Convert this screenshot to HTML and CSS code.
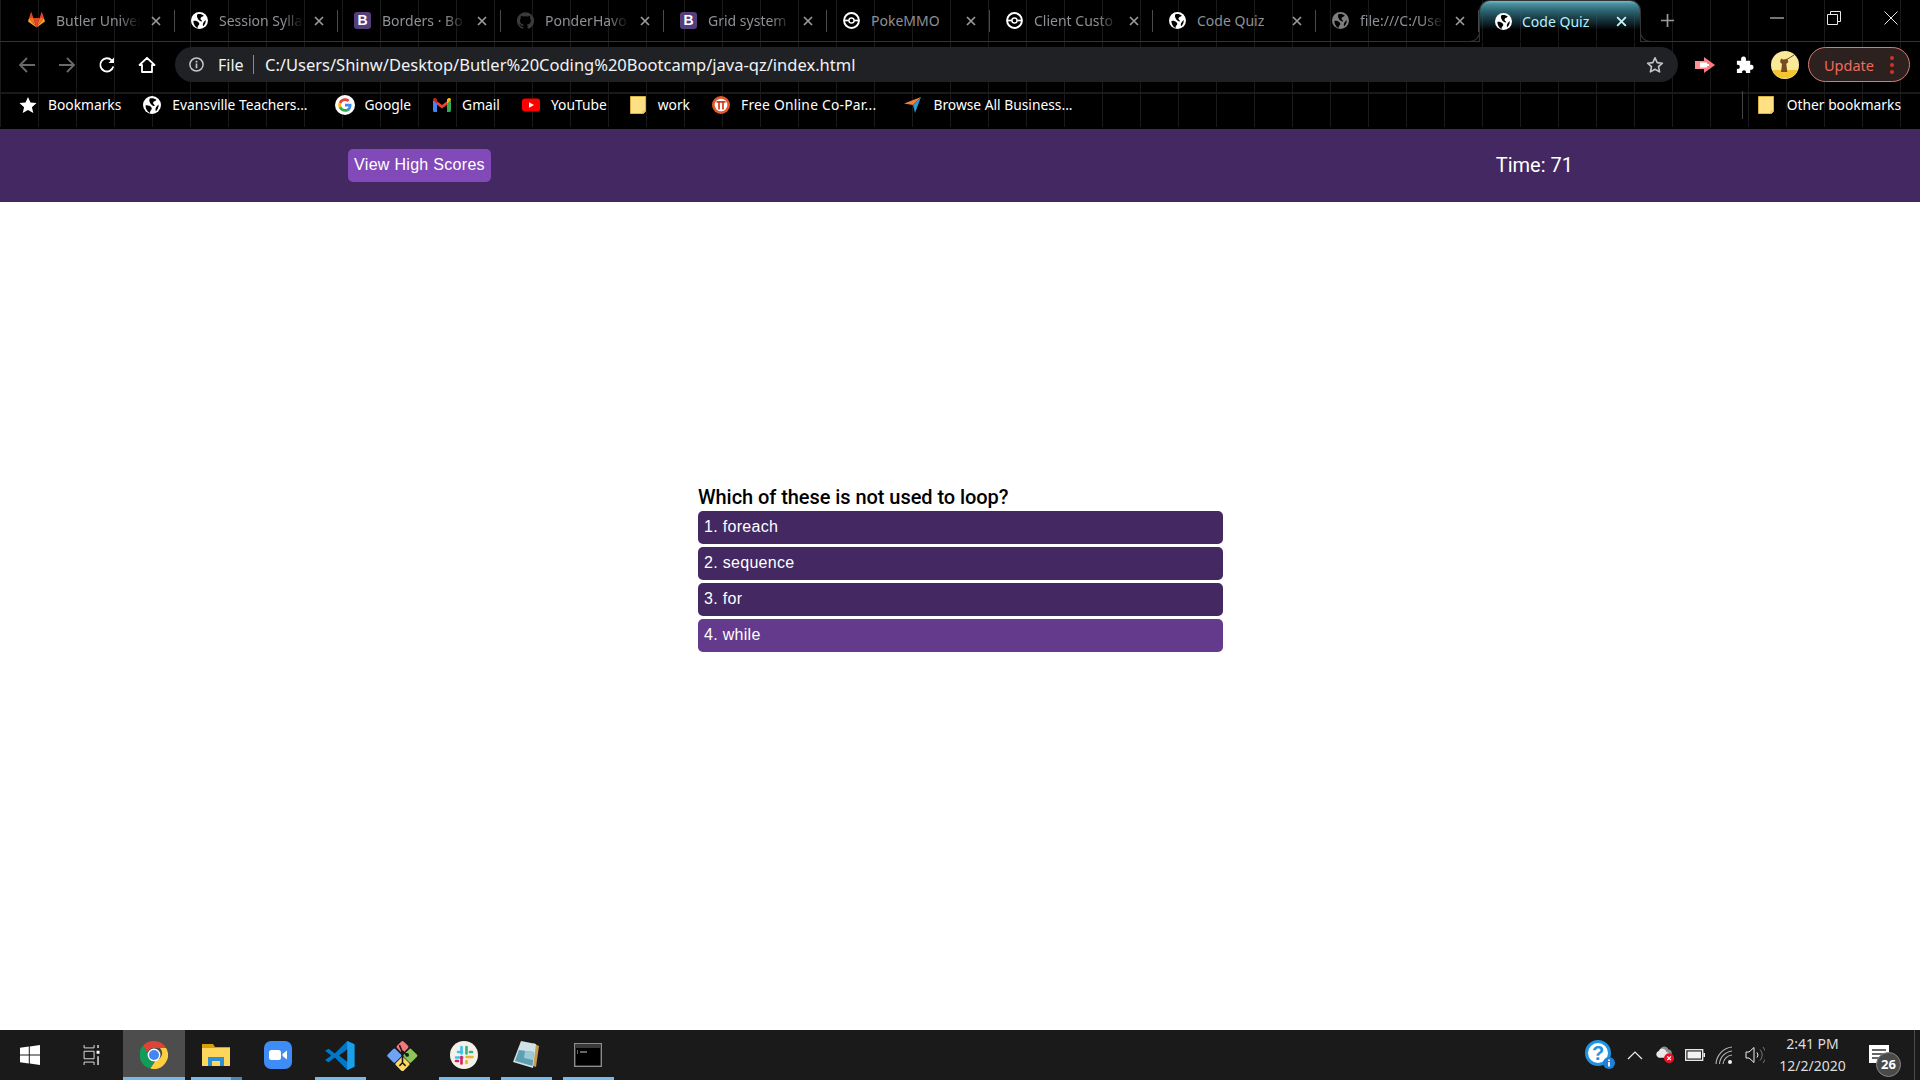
FILE: index.html
```html
<!DOCTYPE html>
<html lang="en">
<head>
  <meta charset="UTF-8" />
  <title>Code Quiz</title>
  <link rel="stylesheet" href="styles.css">
</head>
<body>
  <svg class="sprites" xmlns="http://www.w3.org/2000/svg">
    <symbol id="globe" viewBox="0 0 16 16">
      <circle cx="8" cy="8" r="8" fill="currentColor"/>
      <path fill="#000" d="M6 2.200c2-.6 4.500-.2 6 1.200-1 1.600-2.500 1-3 2.400-.5 1.400 1.500 1.800 1.500 3-1.200.4-3-.8-3.800-2C6 5.500 5 4 6 2.200zM2.200 8.500c1.800-.6 3.800.2 5 1.300 1 1 .6 2.300-.3 3-.6.5-.6 1.500-.7 2.300C3.800 14.200 2.300 11.500 2.200 8.500zM13.800 7.500c.3 2.500-.8 4.500-2.300 6-.8-1.500-.3-3 .6-4.200.5-.7 1-1.300 1.700-1.800z"/>
    </symbol>
    <symbol id="pokeball" viewBox="0 0 16 16">
      <circle cx="8" cy="8" r="7" fill="none" stroke="currentColor" stroke-width="1.800"/>
      <path d="M1 8h14" stroke="currentColor" stroke-width="1.600"/>
      <circle cx="8" cy="8" r="2.400" fill="#000" stroke="currentColor" stroke-width="1.300"/>
    </symbol>
    <symbol id="close" viewBox="0 0 12 12">
      <path d="M2 2l8 8M10 2l-8 8" stroke="currentColor" stroke-width="1.700" fill="none"/>
    </symbol>
    <symbol id="folder" viewBox="0 0 16 18">
      <path fill="#ffe082" stroke="#d9b13f" stroke-width="1" d="M.5.500h15v15l-2 2H.500z"/>
      <path fill="#e8c252" d="M12.500 14.500h3l-3 3z"/>
    </symbol>
  </svg>

  <div class="browser">
    <div class="tabstrip">
      <div class="tab">
        <svg class="fav" viewBox="0 0 24 24">
          <path fill="#e24329" d="M12 22 16.400 8.500H7.600z"/>
          <path fill="#fc6d26" d="M12 22 7.600 8.500H1.500zM12 22l4.400-13.500h6.100z"/>
          <path fill="#fca326" d="M1.500 8.500.2 12.600c-.1.4 0 .8.3 1L12 22zM22.500 8.500l1.300 4.100c.1.400 0 .8-.3 1L12 22z"/>
          <path fill="#e24329" d="M1.500 8.500h6.100L5 .6c-.1-.4-.7-.4-.9 0zM22.500 8.500h-6.100L19 .6c.1-.4.700-.4.900 0z"/>
        </svg>
        <span class="tab-title">Butler Univer</span>
        <svg class="tab-x"><use href="#close"/></svg>
      </div>
      <div class="tab">
        <svg class="fav globe-ic"><use href="#globe"/></svg>
        <span class="tab-title">Session Sylla</span>
        <svg class="tab-x"><use href="#close"/></svg>
      </div>
      <div class="tab">
        <span class="fav fav-b">B</span>
        <span class="tab-title">Borders · Bo</span>
        <svg class="tab-x"><use href="#close"/></svg>
      </div>
      <div class="tab">
        <svg class="fav" viewBox="0 0 24 24"><path fill="#3b3b3b" d="M12 .3a12 12 0 0 0-3.800 23.400c.6.1.8-.3.8-.6v-2c-3.300.7-4-1.600-4-1.600-.6-1.400-1.400-1.800-1.400-1.800-1-.7.1-.7.1-.7 1.200.1 1.800 1.200 1.800 1.200 1 1.800 2.800 1.300 3.500 1 .1-.8.4-1.300.8-1.600-2.700-.3-5.500-1.300-5.500-6 0-1.200.5-2.300 1.300-3.100-.2-.4-.6-1.600 0-3.200 0 0 1-.3 3.400 1.200a11.500 11.500 0 0 1 6 0c2.300-1.500 3.300-1.200 3.300-1.200.6 1.600.2 2.800 0 3.200.9.8 1.300 1.900 1.300 3.200 0 4.600-2.800 5.600-5.500 5.900.5.4.9 1 .9 2.200v3.300c0 .3.2.7.8.6A12 12 0 0 0 12 .3"/></svg>
        <span class="tab-title">PonderHavo</span>
        <svg class="tab-x"><use href="#close"/></svg>
      </div>
      <div class="tab">
        <span class="fav fav-b">B</span>
        <span class="tab-title">Grid system</span>
        <svg class="tab-x"><use href="#close"/></svg>
      </div>
      <div class="tab">
        <svg class="fav globe-ic"><use href="#pokeball"/></svg>
        <span class="tab-title tab-title-full">PokeMMO</span>
        <svg class="tab-x"><use href="#close"/></svg>
      </div>
      <div class="tab">
        <svg class="fav globe-ic"><use href="#pokeball"/></svg>
        <span class="tab-title">Client Custo</span>
        <svg class="tab-x"><use href="#close"/></svg>
      </div>
      <div class="tab">
        <svg class="fav globe-ic"><use href="#globe"/></svg>
        <span class="tab-title tab-title-full">Code Quiz</span>
        <svg class="tab-x"><use href="#close"/></svg>
      </div>
      <div class="tab">
        <svg class="fav globe-dim"><use href="#globe"/></svg>
        <span class="tab-title">file:///C:/Use</span>
        <svg class="tab-x"><use href="#close"/></svg>
      </div>
      <div class="tab tab-active">
        <svg class="fav globe-ic"><use href="#globe"/></svg>
        <span class="tab-title tab-title-full">Code Quiz</span>
        <svg class="tab-x"><use href="#close"/></svg>
      </div>
      <svg class="new-tab" viewBox="0 0 16 16"><path d="M8 1v14M1 8h14" stroke="#9a9a9a" stroke-width="1.800"/></svg>
      <div class="win-btns">
        <svg class="win-btn" viewBox="0 0 14 14"><path d="M0 7h14" stroke="#e8e8e8" stroke-width="1"/></svg>
        <svg class="win-btn" viewBox="0 0 14 14"><path d="M.5 3.500h10v10H.500zM3.500 3.500v-3h10v10h-3" stroke="#e8e8e8" fill="none"/></svg>
        <svg class="win-btn" viewBox="0 0 14 14"><path d="M.5.500l13 13M13.500.500l-13 13" stroke="#e8e8e8" fill="none"/></svg>
      </div>
    </div>

    <div class="toolbar">
      <div class="nav-btns">
        <svg class="nav-ic" viewBox="0 0 18 18"><path d="M17 9H2M9 2 2 9l7 7" stroke="#6a6a6a" stroke-width="1.800" fill="none"/></svg>
        <svg class="nav-ic" viewBox="0 0 18 18"><path d="M1 9h15M9 2l7 7-7 7" stroke="#6a6a6a" stroke-width="1.800" fill="none"/></svg>
        <svg class="nav-ic" viewBox="0 0 18 18"><path d="M15.300 10.500A6.600 6.600 0 1 1 13.700 4.300" stroke="#fff" stroke-width="1.800" fill="none"/><path d="M16 1.500V7h-5.500z" fill="#fff"/></svg>
        <svg class="nav-ic" viewBox="0 0 18 18"><path d="M9 1.800 1.500 9H4v7h10V9h2.500z" stroke="#fff" stroke-width="1.800" fill="none" stroke-linejoin="round"/></svg>
      </div>
      <div class="omnibox">
        <svg class="info-ic" viewBox="0 0 16 16"><circle cx="8" cy="8" r="7" stroke="#c6c6c6" stroke-width="1.600" fill="none"/><path d="M8 7v5M8 4v1.800" stroke="#c6c6c6" stroke-width="1.800"/></svg>
        <span class="omni-file">File</span>
        <span class="omni-sep"></span>
        <span class="omni-url">C:/Users/Shinw/Desktop/Butler%20Coding%20Bootcamp/java-qz/index.html</span>
        <svg class="star-ic" viewBox="0 0 18 18"><path d="M9 1.800l2.200 4.800 5.200.6-3.900 3.500 1.100 5.200L9 13.300l-4.600 2.600 1.100-5.200-3.900-3.500 5.200-.6z" stroke="#c6c6c6" stroke-width="1.600" fill="none" stroke-linejoin="round"/></svg>
      </div>
      <div class="toolbar-right">
        <svg class="ext-ic" viewBox="0 0 20 16"><path fill="#ff8f94" d="M0 4h9v8H0z"/><path fill="#ff7b84" d="M9 0l11 8-11 8z"/><path fill="#fff" d="M5 5.500h7V7h2v2h-2v1.500H5z"/></svg>
        <svg class="puzzle-ic" viewBox="0 0 20 20"><path fill="#fff" d="M2 6h4.500C6 3.500 6.800 1.500 9 1.500s3 2 2.500 4.500H16v4.500c2.500-.5 3.500.5 3.500 2.500s-1 3-3.500 2.500V19h-4.500c.5-2-.5-3-2-3s-2.500 1-2 3H2v-4.500c2 .5 3-.5 3-2s-1-2.500-3-2z"/></svg>
        <svg class="avatar" viewBox="0 0 28 28">
          <circle cx="14" cy="14" r="14" fill="#fbe99a"/>
          <path fill="#f2c531" d="M1.200 19h25.600A14 14 0 0 1 1.200 19z"/>
          <path fill="#7a4a22" d="M10 21l1-8-2-2 1-3.500 2 1 2.500-.2 1.800-.9 1 3.600-2 2 1 8z"/>
          <path stroke="#7a4a22" stroke-width="1" d="M15 9l8-5"/>
        </svg>
        <div class="update-pill">
          <span>Update</span>
          <span class="pill-dots"><i></i><i></i><i></i></span>
        </div>
      </div>
    </div>

    <div class="bookmarks">
      <div class="bm">
        <svg class="bm-ic" viewBox="0 0 16 16"><path fill="#fff" d="M8 .800l2.200 5 5.400.5-4.100 3.600 1.200 5.300L8 12.400l-4.700 2.800 1.200-5.300L.4 6.300l5.400-.5z"/></svg>
        <span>Bookmarks</span>
      </div>
      <div class="bm bm-long">
        <svg class="bm-ic globe-ic"><use href="#globe"/></svg>
        <span>Evansville Teachers...</span>
      </div>
      <div class="bm">
        <svg class="bm-ic bm-ic-big" viewBox="0 0 26 26">
          <circle cx="13" cy="13" r="13" fill="#fff"/>
          <g transform="translate(3.400 3.400) scale(.8)">
            <path fill="#4285F4" d="M22.560 12.250c0-.78-.07-1.530-.2-2.250H12v4.260h5.920c-.26 1.370-1.040 2.530-2.210 3.310v2.770h3.570c2.080-1.920 3.280-4.740 3.280-8.090z"/>
            <path fill="#34A853" d="M12 23c2.970 0 5.460-.98 7.280-2.660l-3.570-2.770c-.98.66-2.230 1.060-3.710 1.060-2.860 0-5.290-1.930-6.160-4.530H2.180v2.840C3.990 20.530 7.700 23 12 23z"/>
            <path fill="#FBBC05" d="M5.840 14.090c-.22-.66-.35-1.360-.35-2.090s.13-1.430.35-2.090V7.070H2.180C1.430 8.550 1 10.220 1 12s.43 3.450 1.180 4.930l3.660-2.840z"/>
            <path fill="#EA4335" d="M12 5.380c1.620 0 3.060.56 4.210 1.640l3.150-3.150C17.450 2.090 14.970 1 12 1 7.700 1 3.990 3.470 2.180 7.070l3.660 2.840c.87-2.600 3.300-4.530 6.160-4.530z"/>
          </g>
        </svg>
        <span>Google</span>
      </div>
      <div class="bm">
        <svg class="bm-ic" viewBox="0 0 18 14">
          <path fill="#ea4335" d="M1 1l8 6 8-6v3.500L9 10.500 1 4.500z"/>
          <path fill="#4285f4" d="M0 2v10.500c0 .8.700 1.500 1.500 1.500H4V5.500z"/>
          <path fill="#34a853" d="M18 2v10.500c0 .8-.7 1.500-1.500 1.500H14V5.500z"/>
          <path fill="#c5221f" d="M0 2c0-2 2-2.500 3-1.500L4 1.300v4.200z"/>
          <path fill="#fbbc04" d="M18 2c0-2-2-2.500-3-1.500l-1 .8v4.200z"/>
        </svg>
        <span>Gmail</span>
      </div>
      <div class="bm">
        <svg class="bm-ic" viewBox="0 0 18 13"><rect width="18" height="13" rx="3" fill="#f00"/><path fill="#fff" d="M7 3.700v5.600l5-2.800z"/></svg>
        <span>YouTube</span>
      </div>
      <div class="bm">
        <svg class="bm-ic"><use href="#folder"/></svg>
        <span>work</span>
      </div>
      <div class="bm bm-long bm-wide">
        <svg class="bm-ic" viewBox="0 0 16 16"><circle cx="8" cy="8" r="8" fill="#e2592b"/><circle cx="8" cy="8" r="5.600" fill="#fff"/><path fill="#d23c1e" d="M4 4.500h8v1.500h-1.500V12H9V6H7v6H5.500V6H4z"/></svg>
        <span>Free Online Co-Par...</span>
      </div>
      <div class="bm">
        <svg class="bm-ic" viewBox="0 0 18 18"><path fill="#f0803c" d="M0 7.500 17 1l-8 8z"/><path fill="#2b9bd6" d="M17 1 9 9l2 8z"/></svg>
        <span>Browse All Business...</span>
      </div>
      <div class="bm-other">
        <svg class="bm-ic"><use href="#folder"/></svg>
        <span>Other bookmarks</span>
      </div>
    </div>
  </div>

  <header class="quiz-bar">
    <button class="scores-btn">View High Scores</button>
    <span class="timer">Time: 71</span>
  </header>

  <main class="quiz">
    <div class="quiz-box">
      <h2 class="question">Which of these is not used to loop?</h2>
      <button class="answer">1. foreach</button>
      <button class="answer">2. sequence</button>
      <button class="answer">3. for</button>
      <button class="answer answer-hover">4. while</button>
    </div>
  </main>

  <footer class="taskbar">
    <div class="task task-start">
      <svg class="task-ic-sm" viewBox="0 0 20 20"><path fill="#fff" d="M0 2.800 8.800 1.500v8H0zM9.800 1.400 20 0v9.500H9.800zM0 10.500h8.800v8L0 17.200zM9.800 10.500H20V20L9.800 18.600z"/></svg>
    </div>
    <div class="task task-view">
      <svg class="task-ic-sm" viewBox="0 0 20 24"><path d="M.5 0v3.500h12V0M.5 24v-3.500h12V24M.5 7.500h12v9H.5z" stroke="#fff" fill="none"/><path fill="#fff" d="M16.500 0h1.500v3.500h-1.500zM15.500 7h3.500v3.500h-3.500zM16.500 13.500h1.500V24h-1.500z"/></svg>
    </div>
    <div class="task task-active">
      <svg class="task-ic" viewBox="0 0 28 28">
        <path fill="#db4437" d="M14 0a14 14 0 0 1 12.100 7H14a7 7 0 0 0-6.700 5L3 4.500A14 14 0 0 1 14 0z"/>
        <path fill="#0f9d58" d="M3 4.500 8 13a7 7 0 0 0 6 8l-3.700 6.500A14 14 0 0 1 3 4.500z"/>
        <path fill="#ffcd40" d="M26.100 7A14 14 0 0 1 10.300 27.500L16 19a7 7 0 0 0 4-12z"/>
        <circle cx="14" cy="14" r="6.400" fill="#fff"/>
        <circle cx="14" cy="14" r="5" fill="#4285f4"/>
      </svg>
    </div>
    <div class="task task-open task-stack">
      <svg class="task-ic" viewBox="0 0 28 28">
        <path fill="#d99e0b" d="M0 3h11l2 3h15v4H0z"/>
        <path fill="#ffd65c" d="M0 7h28v18H0z"/>
        <path fill="#2d8fd5" d="M6 16h16v9h-4v-5h-8v5H6z"/>
      </svg>
    </div>
    <div class="task">
      <svg class="task-ic" viewBox="0 0 28 28"><rect width="28" height="28" rx="7" fill="#3f8cf6"/><rect x="5" y="9" width="12" height="10" rx="2.500" fill="#fff"/><path fill="#fff" d="M18.500 13 23 9.500v9L18.500 15z"/></svg>
    </div>
    <div class="task task-open">
      <svg class="task-ic task-ic-big" viewBox="0 0 30 30">
        <path fill="#0078c8" d="M21.500 1 9.500 13 3.500 8.500 0 10.500 6 15l-6 4.500 3.500 2 6-4.500 12 12 7-3V4z"/>
        <path fill="#1c9ee8" d="M21.500 1l7 3v22l-7 3z"/>
        <path fill="#1a1a1a" d="M21.500 9 13.500 15l8 6z"/>
      </svg>
    </div>
    <div class="task">
      <svg class="task-ic task-ic-big" viewBox="0 0 30 30">
        <rect x="11" y="2" width="9" height="9" rx="1.500" transform="rotate(45 15 6)" fill="#f2787c"/>
        <rect x="17.500" y="10" width="10.500" height="10.500" rx="1.500" transform="rotate(45 22.700 15)" fill="#8cc45a"/>
        <rect x="10" y="18" width="10.500" height="10.500" rx="1.500" transform="rotate(45 15 23)" fill="#ffd966"/>
        <rect x="2" y="10" width="10.500" height="10.500" rx="1.500" transform="rotate(45 7.300 15)" fill="#6fa3f5"/>
        <path d="M12 5l3 7v10M15 12l4 2M15 22l-3 3M15 22l3 3" stroke="#1a1a1a" stroke-width="1.500" fill="none"/>
        <circle cx="15" cy="12" r="1.800" fill="#1a1a1a"/>
        <circle cx="19.500" cy="14.500" r="1.800" fill="#1a1a1a"/>
      </svg>
    </div>
    <div class="task task-open">
      <svg class="task-ic" viewBox="0 0 28 28">
        <circle cx="14" cy="14" r="14" fill="#f4f1ea"/>
        <path d="M11.500 6v6.500M8 11h4M6 16.500h6.500" stroke="#36c5f0" stroke-width="2.600" stroke-linecap="round" fill="none"/>
        <path d="M16.500 6v6.500" stroke="#2eb67d" stroke-width="2.600" stroke-linecap="round"/>
        <path d="M20 11h2" stroke="#2eb67d" stroke-width="2.600" stroke-linecap="round"/>
        <path d="M16.500 16h6" stroke="#ecb22e" stroke-width="2.600" stroke-linecap="round"/>
        <path d="M16.500 20v2" stroke="#ecb22e" stroke-width="2.600" stroke-linecap="round"/>
        <path d="M11.500 16v6.500" stroke="#e01e5a" stroke-width="2.600" stroke-linecap="round"/>
        <path d="M6 20h2" stroke="#e01e5a" stroke-width="2.600" stroke-linecap="round"/>
      </svg>
    </div>
    <div class="task task-open">
      <svg class="task-ic" viewBox="0 0 28 28">
        <path fill="#c79a4e" d="M21 2l6 3-3 21-3-1z"/>
        <path fill="#cfe2e5" d="M9 0l15 3-3 24L1 21z"/>
        <path fill="#5e9fb4" d="M7 9l15 2-1.500 14L3 20z"/>
        <path fill="#9ccbd6" d="M13 10l9 1-1 8-9-2z"/>
      </svg>
    </div>
    <div class="task task-open">
      <svg class="task-ic" viewBox="0 0 28 24">
        <rect x=".7" y=".7" width="26.600" height="22.600" fill="#000" stroke="#8c8c8c" stroke-width="1.400"/>
        <path fill="#3a3a3a" d="M1.400 1.400h25.200v3.600H1.400z"/>
        <path d="M3 8h1M3 10h1M6 9h7" stroke="#ccc"/>
      </svg>
    </div>

    <div class="tray">
      <svg class="tray-help" viewBox="0 0 30 30">
        <circle cx="13" cy="13" r="11.500" fill="#fff" stroke="#1f95e2" stroke-width="3"/>
        <text x="13" y="20" class="tray-q">?</text>
        <circle cx="24" cy="23" r="6" fill="#1f80d8"/>
        <path d="M24 22v4.500M24 19.500v1.500" stroke="#fff" stroke-width="1.800"/>
      </svg>
      <span class="tray-item"><svg class="tray-ic" viewBox="0 0 16 16"><path d="M1 12l7-7 7 7" stroke="#eee" stroke-width="1.200" fill="none"/></svg></span>
      <span class="tray-item"><svg class="tray-ic-lg" viewBox="0 0 22 20">
        <path fill="#8d8d8d" d="M6 3a5 5 0 0 1 9 1 4 4 0 0 1 3 6H8z"/>
        <path fill="#e9e9e9" d="M4 13a4 4 0 0 1 0-7.500 4.500 4.500 0 0 1 8.500 1.500 3 3 0 0 1 1 6z"/>
        <circle cx="15.500" cy="13.500" r="5.500" fill="#e81123"/>
        <path d="M13.500 11.500l4 4M17.500 11.500l-4 4" stroke="#fff" stroke-width="1.300"/>
      </svg></span>
      <span class="tray-item"><svg class="tray-ic-lg" viewBox="0 0 20 12"><rect x=".7" y=".7" width="17" height="10.600" fill="none" stroke="#f2f2f2" stroke-width="1.300"/><rect x="2.500" y="2.500" width="13.500" height="7" fill="#f2f2f2"/><path fill="#f2f2f2" d="M18.500 4H20v4h-1.500z"/></svg></span>
      <span class="tray-item"><svg class="tray-ic-lg" viewBox="0 0 20 20"><path d="M1 19A18 18 0 0 1 17 2M4.500 19A14 14 0 0 1 17 6M8 19a10 10 0 0 1 9-9" stroke="#b5b5b5" stroke-width="1.100" fill="none"/><circle cx="15" cy="17" r="2" fill="#f2f2f2"/></svg></span>
      <span class="tray-item"><svg class="tray-ic-lg" viewBox="0 0 20 20"><path d="M1 7h3l5-4.500v15L4 13H1z" stroke="#eee" fill="none"/><path d="M12 7.500a4 4 0 0 1 0 5" stroke="#eee" fill="none"/><path d="M15 4.500a8 8 0 0 1 0 11M18 2a12 12 0 0 1 0 16" stroke="#777" fill="none"/></svg></span>
      <div class="clock"><span>2:41 PM</span><span>12/2/2020</span></div>
      <div class="notif">
        <svg class="notif-ic" viewBox="0 0 20 18"><path fill="#fff" d="M0 0h20v18H0z"/><path d="M3 5h14M3 9h14M3 13h10" stroke="#333" stroke-width="1.300"/></svg>
        <span class="notif-count">26</span>
      </div>
    </div>
  </footer>
</body>
</html>
```

FILE: styles.css
```css
* { box-sizing: border-box; }
html, body { height: 100%; }
body { margin: 0; width: 1920px; height: 1080px; overflow: hidden; display: flex; flex-direction: column; background: #fff; font-family: Roboto, "Liberation Sans", sans-serif; }
.sprites { display: none; }

/* browser chrome, with the theme's faint grid behind it */
.browser { height: 129px; flex: none; background-color: #000; background-image: repeating-linear-gradient(90deg, #1a1a1a 0 1px, transparent 1px 38px), linear-gradient(#1a1a1a, #1a1a1a); background-size: 100% 127px, 100% 2px; background-position: 0 0, 0 92px; background-repeat: no-repeat; font-family: "Noto Sans", sans-serif; }

.tabstrip { height: 42px; padding-left: 12px; display: flex; align-items: center; border-bottom: 1px solid #333; }
.tab { width: 163px; height: 22px; flex: none; display: flex; align-items: center; padding-left: 16px; position: relative; color: #8e9195; font-size: 14px; border-right: 1px solid #4a4a4a; }
.fav { width: 17px; height: 17px; flex: none; }
.fav-b { border-radius: 3px; background: #563d7c; color: #fff; font: bold 14px/17px "Liberation Sans", sans-serif; text-align: center; }
.globe-ic { color: #fff; }
.globe-dim { color: #7d7d7d; }
.tab-title { width: 88px; margin-left: 11px; white-space: nowrap; overflow: hidden; -webkit-mask-image: linear-gradient(90deg, #000 72%, transparent 96%); mask-image: linear-gradient(90deg, #000 72%, transparent 96%); }
.tab-title-full { -webkit-mask-image: none; mask-image: none; }
.tab-x { width: 12px; height: 12px; margin-left: 6px; flex: none; color: #9b9b9b; }
.tab-active { height: 42px; width: 162px; margin-bottom: -1px; align-self: flex-start; padding: 0 0 0 15px; border: 1px solid #333; border-bottom: none; border-radius: 11px 11px 0 0; color: #b4f1ff; background: linear-gradient(#000, #000) bottom / 100% 1px no-repeat, linear-gradient(#6cc0cf 0, #4a8f9d 3px, #2b6270 10px, rgba(0, 0, 0, 0) 29px); }
.tab-active::before, .tab-active::after { content: ""; position: absolute; bottom: 0; width: 10px; height: 10px; border-bottom: 1px solid #333; }
.tab-active::before { left: -11px; border-right: 1px solid #333; border-bottom-right-radius: 10px; }
.tab-active::after { right: -11px; border-left: 1px solid #333; border-bottom-left-radius: 10px; }
.tab-active .tab-x { margin-left: 9px; color: #c4f5ff; width: 13px; height: 13px; }
.tab-active .tab-title { width: 84px; margin-left: 10px; }
.new-tab { width: 15px; height: 15px; margin-left: 19px; }
.win-btns { margin-left: auto; display: flex; padding-right: 22px; gap: 43px; align-self: flex-start; padding-top: 11px; }
.win-btn { width: 14px; height: 14px; }

.toolbar { height: 40px; padding-top: 5px; display: flex; align-items: center; }
.nav-btns { width: 175px; flex: none; display: flex; align-items: center; padding-left: 18px; gap: 22px; }
.nav-ic { width: 18px; height: 18px; flex: none; }
.omnibox { width: 1503px; height: 35px; flex: none; display: flex; align-items: center; padding: 0 14px; border-radius: 18px; background: #202124; color: #f1f3f4; font-size: 16.5px; }
.info-ic { width: 15px; height: 15px; margin-right: 14px; flex: none; }
.omni-file { width: 25px; font-size: 16px; }
.omni-sep { width: 1px; height: 19px; margin: 0 11px 0 10px; background: #8a8a8a; }
.omni-url { white-space: nowrap; }
.star-ic { width: 18px; height: 18px; margin-left: auto; margin-right: 0; flex: none; }
.toolbar-right { display: flex; align-items: center; flex: 1; }
.ext-ic { width: 20px; height: 16px; margin-left: 17px; }
.puzzle-ic { width: 19px; height: 19px; margin-left: 20px; }
.avatar { width: 28px; height: 28px; margin-left: 17px; }
.update-pill { width: 102px; height: 35px; margin-left: 9px; display: flex; align-items: center; padding-left: 15px; border: 1px solid #d97a70; border-radius: 18px; background: #2d2120; color: #ee6b5c; font-size: 14.5px; }
.pill-dots { margin-left: auto; margin-right: 15px; display: flex; flex-direction: column; gap: 3px; }
.pill-dots i { display: block; width: 4px; height: 4px; border-radius: 50%; background: #d93025; }

.bookmarks { height: 46px; padding: 0 19px 1px 19px; display: flex; align-items: center; color: #fff; font-size: 13.8px; }
.bm { display: flex; align-items: center; gap: 11px; margin-right: 22px; white-space: nowrap; }
.bm-long { margin-right: 28px; }
.bm-wide span { letter-spacing: .25px; }
.bm-ic { width: 18px; height: 18px; flex: none; }
.bm-ic-big { width: 20px; height: 20px; margin: 0 -1px; }
.bm-other { margin-left: auto; height: 28px; padding-left: 14px; display: flex; align-items: center; gap: 12px; border-left: 1px solid #444; white-space: nowrap; }

/* the quiz page itself */
.quiz-bar { height: 73px; flex: none; padding: 0 347px 0 348px; display: flex; align-items: center; justify-content: space-between; background: #432861; }
.scores-btn { width: 143px; height: 33px; padding: 0 0 2px; border: none; border-radius: 5px; background: #824ab8; color: #fff; letter-spacing: .3px; font: 16px "Liberation Sans", sans-serif; }
.timer { color: #fff; font-size: 20px; margin-bottom: 2px; }

.quiz { flex: 1; padding-top: 283px; display: flex; justify-content: center; }
.quiz-box { width: 525px; margin-left: 1px; display: flex; flex-direction: column; gap: 3px; }
.question { margin: 0; height: 23px; font-size: 20px; line-height: 24px; font-weight: 500; letter-spacing: -.06px; color: #000; }
.answer { height: 33px; padding: 0 0 1px 6px; border: none; border-radius: 5px; background: #432861; color: #fff; text-align: left; letter-spacing: .3px; font: 16px "Liberation Sans", sans-serif; }
.answer-hover { background: #633a8c; }

.taskbar { height: 50px; flex: none; display: flex; background: #1a1a1a; font-family: "Noto Sans", sans-serif; }
.task { width: 62px; flex: none; display: flex; align-items: center; justify-content: center; position: relative; }
.task-start { width: 60px; }
.task-view { width: 63px; }
.task-active { background: #4d4d4d; }
.task-open::after, .task-active::after { content: ""; position: absolute; left: 6px; right: 5px; bottom: 0; height: 3px; background: #76b9ed; }
.task-active::after { left: 0; right: 0; }
.task-stack::before { content: ""; position: absolute; right: 5px; bottom: 0; width: 11px; height: 3px; background: #4d86b2; z-index: 1; }
.task-ic { width: 28px; height: 28px; }
.task-ic-big { width: 31px; height: 31px; }
.task-ic-sm { width: 20px; height: 20px; }

.tray { margin-left: auto; display: flex; align-items: center; height: 50px; }
.tray-help { width: 30px; height: 30px; margin-right: 5px; }
.tray-q { font: bold 20px "Liberation Sans", sans-serif; fill: #1f95e2; text-anchor: middle; }
.tray-item { width: 30px; display: flex; justify-content: center; }
.tray-ic { width: 16px; height: 16px; }
.tray-ic-lg { width: 20px; height: 20px; }
.clock { width: 85px; display: flex; flex-direction: column; align-items: center; gap: 3px; color: #dedede; font-size: 14px; line-height: 19px; margin-top: -2px; }
.notif { width: 60px; height: 50px; position: relative; display: flex; align-items: center; padding-left: 14px; border-right: 1px solid #4a4a4a; margin-right: 5px; }
.notif-ic { width: 20px; height: 18px; margin-top: -2px; }
.notif-count { position: absolute; left: 21px; top: 22px; width: 25px; height: 25px; border-radius: 50%; background: #4a4a4a; border: 1px solid #888; color: #fff; font-size: 13px; font-weight: bold; line-height: 23px; text-align: center; }
```
